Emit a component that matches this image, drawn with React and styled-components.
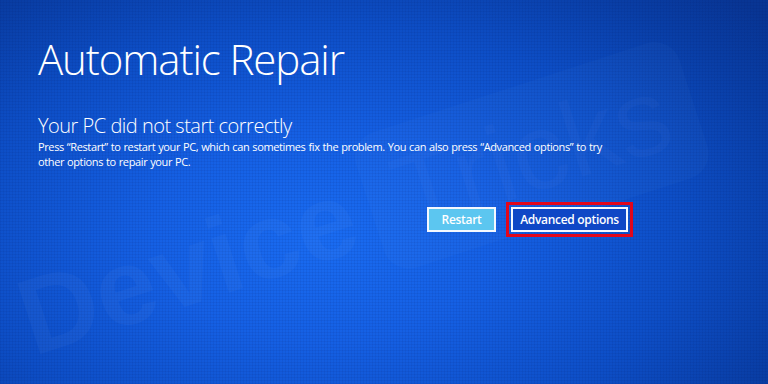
import React from 'react';
import styled, { createGlobalStyle } from 'styled-components';

const GlobalStyle = createGlobalStyle`
  html, body {
    margin: 0;
    padding: 0;
    background: #0b45b6;
  }
`;

const Screen = styled.div`
  position: relative;
  width: 768px;
  height: 384px;
  overflow: hidden;
  box-sizing: border-box;
  padding: 31px 0 0 38px;
  font-family: "Open Sans", "Noto Sans", sans-serif;
  color: #ffffff;
  background:
    repeating-linear-gradient(90deg, rgba(0, 20, 90, 0.07) 0 1px, transparent 1px 3px),
    repeating-linear-gradient(0deg, rgba(0, 20, 90, 0.07) 0 1px, transparent 1px 3px),
    radial-gradient(ellipse 75% 90% at 42% 62%, #1a6cf2 0%, #1560e4 30%, #0d4ec6 62%, #093ea6 85%, #083594 100%);
`;

const Watermark = styled.div`
  position: absolute;
  left: 22px;
  top: 250px;
  display: flex;
  align-items: center;
  gap: 18px;
  transform: rotate(-18deg);
  transform-origin: left center;
  font-family: "Liberation Sans", Arial, sans-serif;
  font-weight: 700;
  font-size: 108px;
  line-height: 1;
  white-space: nowrap;
  color: rgba(150, 190, 255, 0.05);
  pointer-events: none;
`;

const MarkBox = styled.span`
  display: inline-block;
  padding: 16px 28px 18px;
  border-radius: 26px;
  background: rgba(150, 190, 255, 0.035);
  color: rgba(150, 190, 255, 0.04);
  font-weight: 400;
`;

const Content = styled.div`
  position: relative;
  width: 595px;
  display: flex;
  flex-direction: column;
`;

const Title = styled.h1`
  margin: 0;
  font-weight: 300;
  font-size: 42px;
  line-height: 56px;
  letter-spacing: -1.1px;
`;

const Subtitle = styled.h2`
  margin: 26px 0 0;
  font-weight: 300;
  font-size: 20px;
  line-height: 26px;
  letter-spacing: -0.5px;
`;

const Body = styled.p`
  margin: 0;
  font-weight: 400;
  font-size: 11px;
  line-height: 15px;
  letter-spacing: -0.38px;
  word-spacing: 0.5px;
`;

const Actions = styled.div`
  display: flex;
  justify-content: flex-end;
  align-items: center;
  gap: 10px;
  margin-top: 33px;
`;

const Button = styled.div`
  box-sizing: border-box;
  display: flex;
  align-items: center;
  justify-content: center;
  width: ${p => p.w}px;
  height: 25px;
  border: 2px solid #f4f8ff;
  background: ${p => (p.light ? '#5cc6f0' : '#0f47c6')};
  font-size: 12px;
  font-weight: 600;
  letter-spacing: -0.3px;
  color: #ffffff;
`;

const Highlight = styled.div`
  border: 3px solid #e2061b;
  padding: 2px;
`;

export default function App() {
  return (
    <>
      <GlobalStyle />
      <Screen>
        <Watermark>
          <span>Device</span>
          <MarkBox>Tricks</MarkBox>
        </Watermark>
        <Content>
          <Title>Automatic Repair</Title>
          <Subtitle>Your PC did not start correctly</Subtitle>
          <Body>
            Press “Restart” to restart your PC, which can sometimes fix the problem. You can also press “Advanced options” to try
            <br />
            other options to repair your PC.
          </Body>
          <Actions>
            <Button light w={69}>Restart</Button>
            <Highlight>
              <Button w={117}>Advanced options</Button>
            </Highlight>
          </Actions>
        </Content>
      </Screen>
    </>
  );
}
